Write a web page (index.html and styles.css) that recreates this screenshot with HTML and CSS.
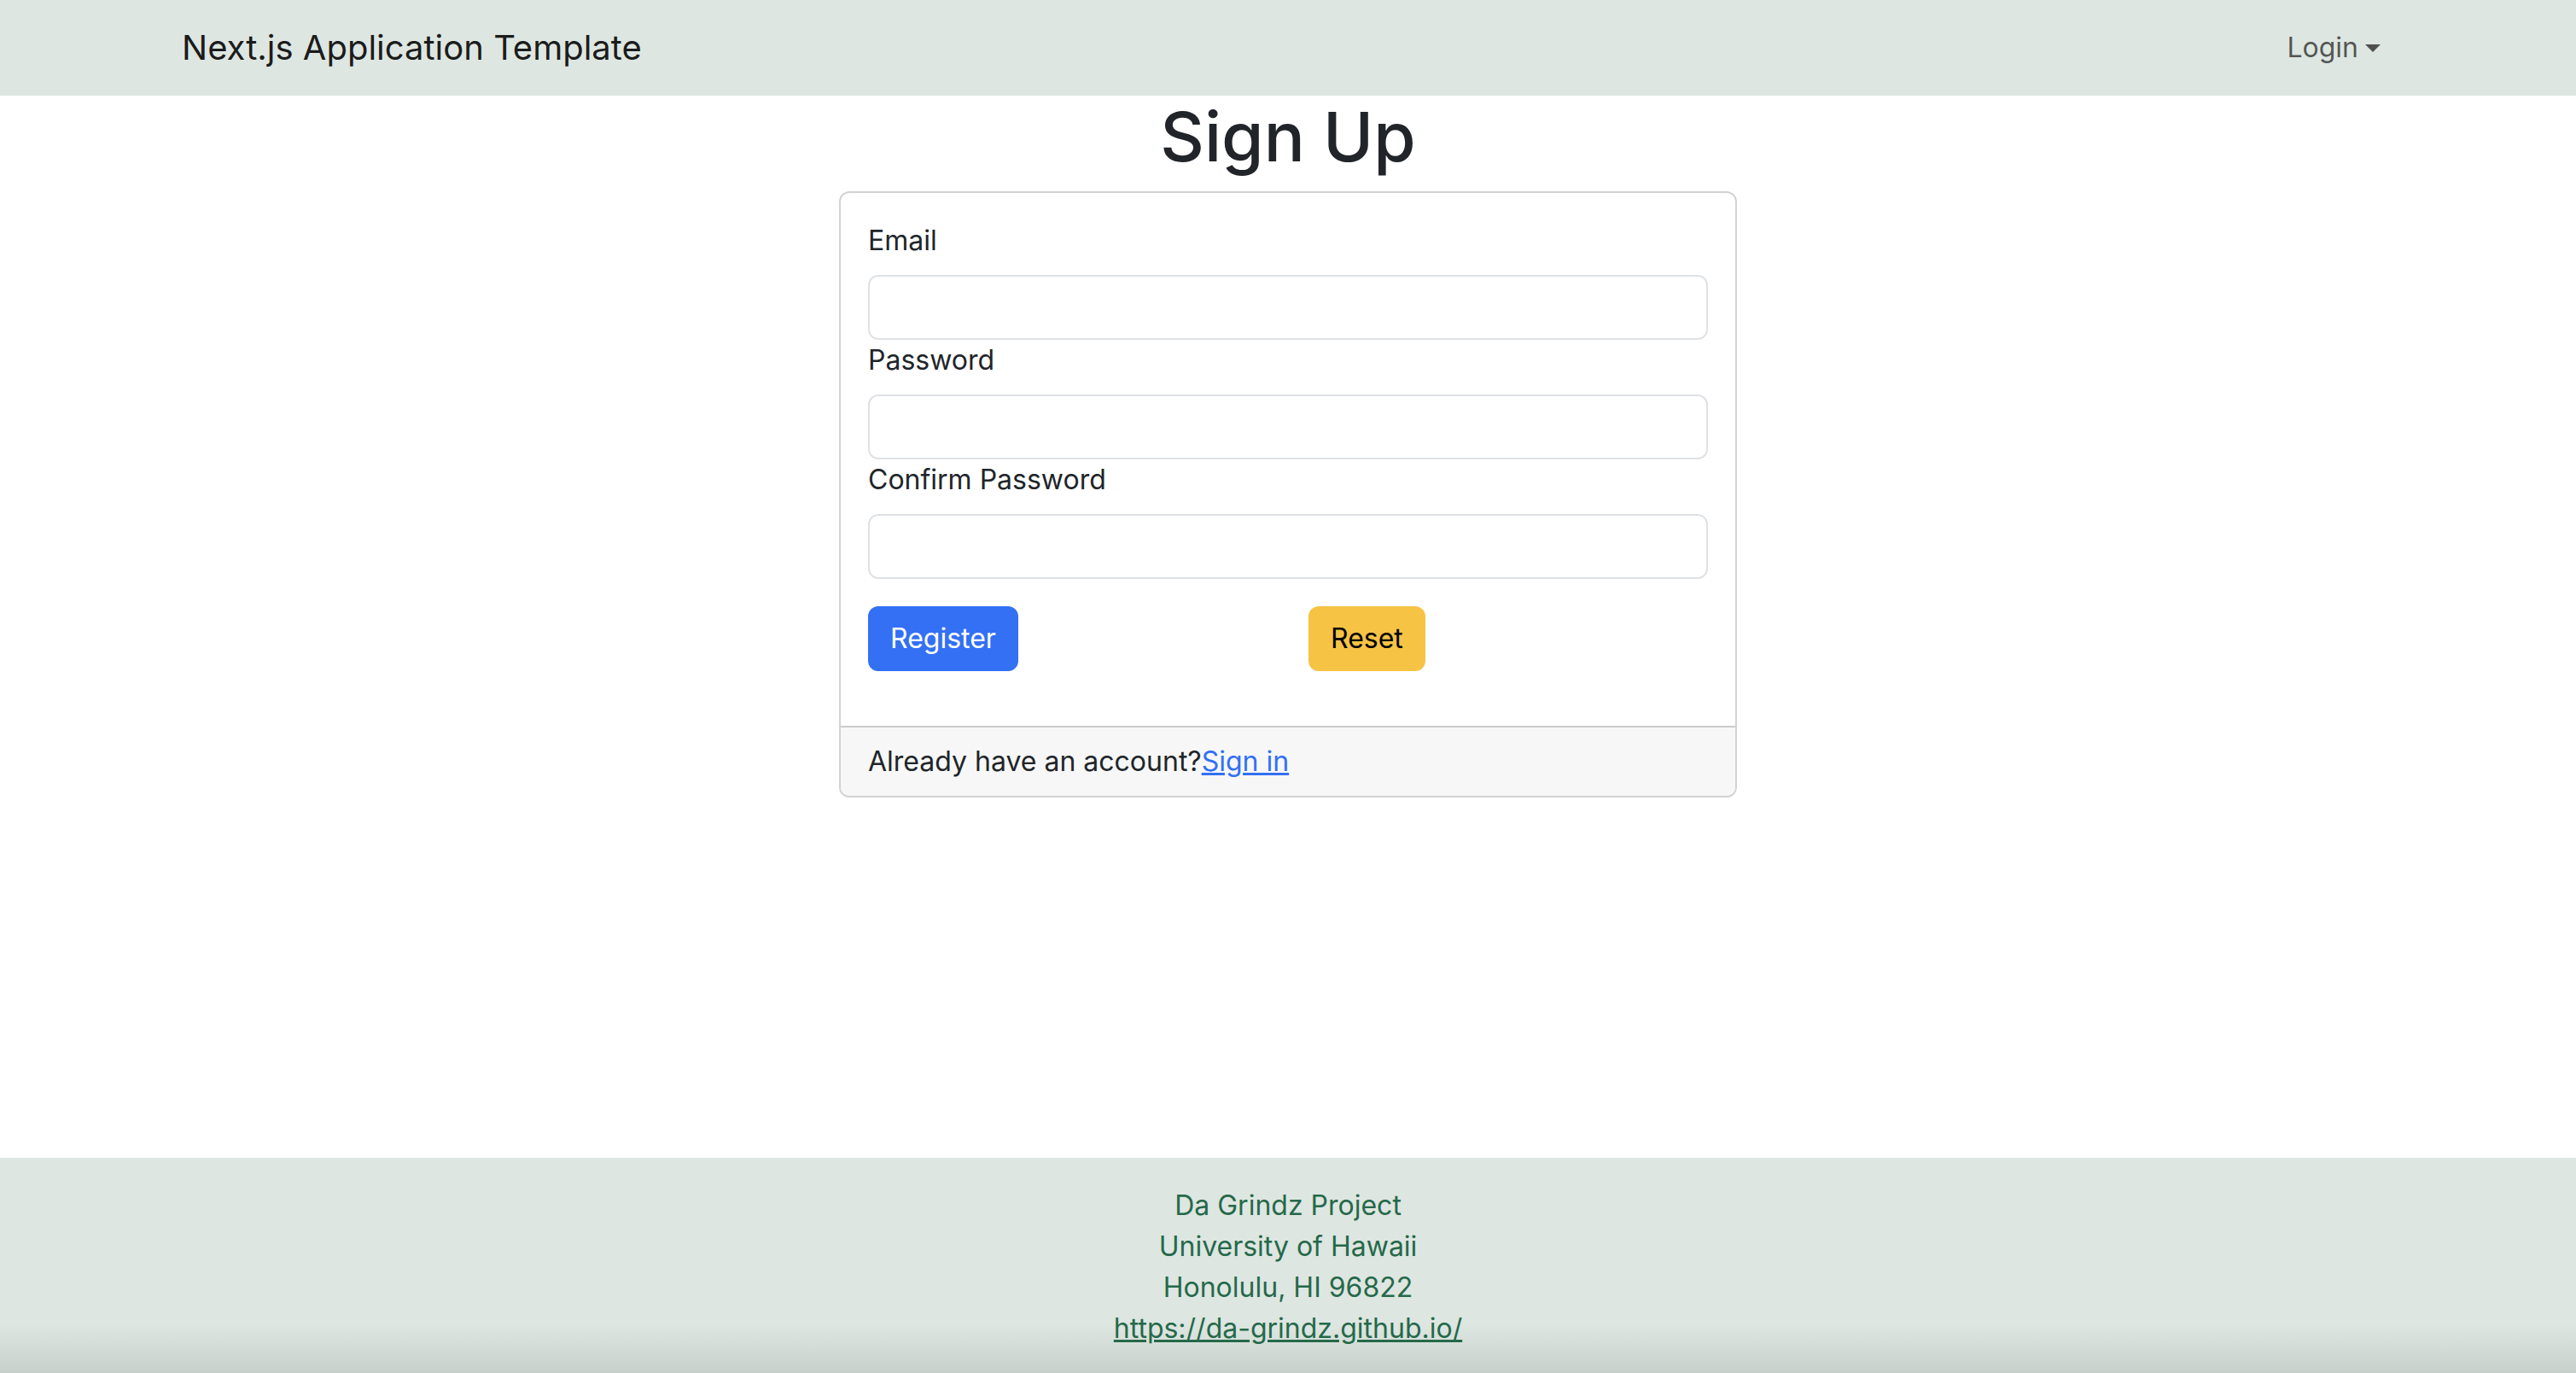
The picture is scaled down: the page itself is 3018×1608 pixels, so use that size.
FILE: index.html
```html
<!DOCTYPE html>
<html lang="en">
<head>
    <meta charset="UTF-8">
    <meta name="viewport" content="width=device-width, initial-scale=1.0">
    <title>Sign Up</title>
    <link rel="stylesheet" href="styles.css">
</head>
<body>

    <!-- Top navigation -->
    <nav class="navbar">
        <div class="container nav-inner">
            <a class="navbar-brand" href="#">Next.js Application Template</a>
            <a class="nav-link dropdown-toggle" href="#">Login</a>
        </div>
    </nav>

    <!-- Sign up form -->
    <main class="main">
        <h1 class="page-title">Sign Up</h1>
        <div class="card">
            <div class="card-body">
                <form id="signupForm">
                    <label for="email">Email</label>
                    <input type="text" id="email" name="email">

                    <label for="password">Password</label>
                    <input type="password" id="password" name="password">

                    <label for="confirmPassword">Confirm Password</label>
                    <input type="password" id="confirmPassword" name="confirmPassword">

                    <div class="btn-row">
                        <div><button type="submit" class="btn btn-primary">Register</button></div>
                        <div><button type="reset" class="btn btn-warning">Reset</button></div>
                    </div>
                </form>
            </div>
            <div class="card-footer">
                Already have an account?<a href="#">Sign in</a>
            </div>
        </div>
    </main>

    <!-- Footer -->
    <footer class="footer">
        Da Grindz Project<br>
        University of Hawaii<br>
        Honolulu, HI 96822<br>
        <a href="#">https://da-grindz.github.io/</a>
    </footer>

</body>
</html>
```

FILE: styles.css
```css
/* Basic resets and body styling */
* {
    box-sizing: border-box;
}

body {
    margin: 0;
    font-family: Inter, "Noto Sans", sans-serif;
    font-size: 32px;
    line-height: 1.5;
    color: #212529;
    background-color: #fff;
    display: flex;
    flex-direction: column;
    min-height: 100vh;
}

.container {
    width: 100%;
    max-width: 2640px;
    margin: 0 auto;
    padding: 0 24px;
}

/* Navbar */
.navbar {
    background-color: #dee6e1;
    padding: 16px 0;
}

.nav-inner {
    display: flex;
    justify-content: space-between;
    align-items: center;
}

.navbar-brand {
    font-size: 40px;
    line-height: 60px;
    padding: 10px 0;
    color: rgba(0, 0, 0, 0.9);
    text-decoration: none;
}

.nav-link {
    padding: 16px;
    color: rgba(0, 0, 0, 0.65);
    text-decoration: none;
}

.dropdown-toggle::after {
    content: "";
    display: inline-block;
    margin-left: 8px;
    vertical-align: 6px;
    border-top: 9.6px solid;
    border-right: 9.6px solid transparent;
    border-left: 9.6px solid transparent;
}

/* Main area */
.main {
    flex: 1;
}

.page-title {
    margin: 0 0 16px;
    font-size: 80px;
    font-weight: 500;
    line-height: 1.2;
    text-align: center;
}

.card {
    width: 1052px;
    margin: 0 auto;
    border: 2px solid rgba(0, 0, 0, 0.175);
    border-radius: 12px;
    overflow: hidden;
}

.card-body {
    padding: 32px;
}

label {
    display: block;
    margin-bottom: 16px;
}

input {
    display: block;
    width: 100%;
    height: 76px;
    padding: 12px 24px;
    font: inherit;
    color: #212529;
    border: 2px solid #dee2e6;
    border-radius: 12px;
}

.btn-row {
    display: grid;
    grid-template-columns: 1fr 1fr;
    column-gap: 48px;
    margin: 32px 0;
}

.btn {
    padding: 12px 24px;
    font: inherit;
    line-height: 48px;
    border: 2px solid transparent;
    border-radius: 12px;
    cursor: pointer;
}

.btn-primary {
    background-color: #3370f4;
    border-color: #3370f4;
    color: #fff;
}

.btn-warning {
    background-color: #f6c345;
    border-color: #f6c345;
    color: #000;
}

.card-footer {
    padding: 16px 32px;
    background-color: #f7f7f7;
    border-top: 2px solid rgba(0, 0, 0, 0.175);
}

.card-footer a {
    color: #3370f4;
}

/* Footer */
.footer {
    padding: 32px 0 28px;
    text-align: center;
    color: #25694a;
    background: linear-gradient(to bottom, #dee6e1 calc(100% - 56px), #c8d0cb 100%);
}

.footer a {
    color: #25694a;
}
```
